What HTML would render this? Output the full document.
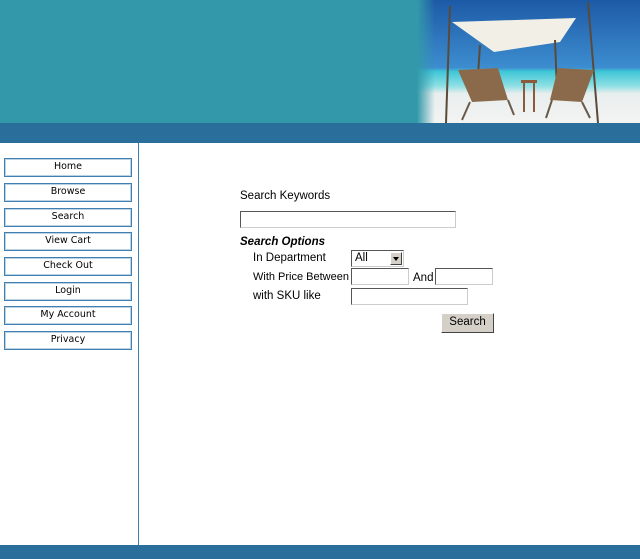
<!DOCTYPE html>
<html><head><style>
body{margin:0;width:640px;height:559px;position:relative;overflow:hidden;background:#fff;font-family:Verdana,"DejaVu Sans",sans-serif}
.hdr{position:absolute;left:0;top:0;width:640px;height:123px;background:#3399aa}
.band{position:absolute;left:0;top:123px;width:640px;height:20px;background:#2a6e9c}
.foot{position:absolute;left:0;top:545px;width:640px;height:14px;background:#2a6e9c}
.vl{position:absolute;left:138px;top:143px;width:1px;height:402px;background:#3a7eb0}
.nav{position:absolute;left:4px;width:126px;height:17px;border:1px solid #3f7fb2;box-shadow:inset 0 0 0 1px #b9d2e4;font-size:9.5px;text-align:center;line-height:15px;color:#000}
.f{position:absolute;font-family:"Liberation Sans",Arial,sans-serif;font-size:11.5px;color:#000;white-space:nowrap}
.in{position:absolute;background:#fff;border:1px solid #ccc;border-top-color:#555;border-left-color:#555;box-sizing:border-box}
</style></head><body>
<div class="hdr"></div>
<svg style="position:absolute;left:390px;top:0" width="250" height="123">
<defs>
<linearGradient id="sky" x1="0" y1="0" x2="0" y2="1"><stop offset="0" stop-color="#1d5aa6"/><stop offset="0.55" stop-color="#3d8dd0"/><stop offset="0.58" stop-color="#3ec6d6"/><stop offset="0.7" stop-color="#8fe0e4"/><stop offset="0.76" stop-color="#e8eeee"/><stop offset="1" stop-color="#f3f4f2"/></linearGradient>
<linearGradient id="fade" x1="0" y1="0" x2="1" y2="0"><stop offset="0" stop-color="#3399aa" stop-opacity="1"/><stop offset="0.6" stop-color="#3399aa" stop-opacity="1"/><stop offset="1" stop-color="#3399aa" stop-opacity="0"/></linearGradient>
</defs>
<rect x="0" y="0" width="250" height="123" fill="url(#sky)"/>
<rect x="0" y="0" width="45" height="123" fill="url(#fade)"/>
<path d="M62 22 L186 18 L170 42 L104 52 Z" fill="#f2efe6"/>
<path d="M60 6 L56 123 M198 2 L208 123 M90 45 L87 90 M165 40 L167 90" stroke="#5a4a3a" stroke-width="2" fill="none"/>
<path d="M68 70 L108 68 L118 100 L82 102 Z" fill="#8a6a4a"/>
<path d="M168 68 L204 70 L192 102 L160 100 Z" fill="#8a6a4a"/>
<path d="M80 102 L72 120 M118 100 L124 115 M162 100 L156 118 M192 102 L200 118" stroke="#6a5a4a" stroke-width="2"/>
<rect x="131" y="80" width="16" height="3" fill="#8a5a3a"/>
<path d="M134 83 L134 112 M144 83 L144 112" stroke="#8a5a3a" stroke-width="2"/>
</svg>
<div class="band"></div>
<div class="vl"></div>
<div class="foot"></div>
<div class="nav" style="top:158px">Home</div>
<div class="nav" style="top:183px">Browse</div>
<div class="nav" style="top:208px">Search</div>
<div class="nav" style="top:232px">View Cart</div>
<div class="nav" style="top:257px">Check Out</div>
<div class="nav" style="top:282px">Login</div>
<div class="nav" style="top:306px">My Account</div>
<div class="nav" style="top:331px">Privacy</div>

<div class="f" style="left:240px;top:190px">Search Keywords</div>
<div class="in" style="left:240px;top:211px;width:216px;height:17px"></div>
<div class="f" style="left:240px;top:236px;font-weight:bold;font-style:italic">Search Options</div>
<div class="f" style="left:253px;top:252px">In Department</div>
<div class="in" style="left:351px;top:250px;width:53px;height:17px;border-color:#555 #ccc #ccc #555"><span class="f" style="left:3px;top:1px">All</span><div style="position:absolute;right:1px;top:1px;width:12px;height:13px;background:#d4d0c8;border:1px solid #fff;border-right-color:#444;border-bottom-color:#444;box-sizing:border-box"><div style="position:absolute;left:2px;top:4px;border:3px solid transparent;border-top:4px solid #000;border-bottom:0"></div></div></div>
<div class="f" style="left:253px;top:271px;font-size:11px">With Price Between</div>
<div class="in" style="left:351px;top:268px;width:58px;height:17px"></div>
<div class="f" style="left:413px;top:272px">And</div>
<div class="in" style="left:435px;top:268px;width:58px;height:17px"></div>
<div class="f" style="left:253px;top:290px">with SKU like</div>
<div class="in" style="left:351px;top:288px;width:117px;height:17px"></div>
<div class="f" style="left:441px;top:313px;width:53px;height:20px;box-sizing:border-box;background:#d4d0c8;border:1px solid #fff;border-right-color:#444;border-bottom-color:#444;text-align:center;line-height:17px">Search</div>
</body></html>
